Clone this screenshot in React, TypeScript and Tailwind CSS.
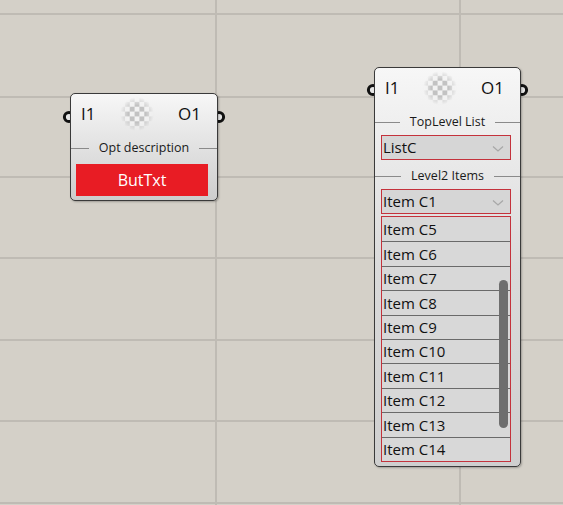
import React from "react";

const font = { fontFamily: '"Open Sans", "Noto Sans", sans-serif' };

const hLines = [14, 97, 177, 258, 340, 421, 503];
const vLines = [216, 460];

const level2 = ["Item C5", "Item C6", "Item C7", "Item C8", "Item C9", "Item C10", "Item C11", "Item C12", "Item C13", "Item C14"];

const Checker: React.FC<{ id: string }> = ({ id }) => {
  const cells = [];
  for (let r = 0; r < 7; r++) {
    for (let c = 0; c < 7; c++) {
      if ((r + c) % 2 === 0) cells.push(<rect key={`${r}-${c}`} x={c * 5} y={r * 5} width={5} height={5} fill="#c2c2c2" />);
    }
  }
  return (
    <svg width="34" height="34" viewBox="0 0 35 35">
      <defs>
        <radialGradient id={`g-${id}`} cx="50%" cy="50%" r="50%">
          <stop offset="50%" stopColor="#fff" stopOpacity="1" />
          <stop offset="100%" stopColor="#fff" stopOpacity="0" />
        </radialGradient>
        <mask id={`m-${id}`}>
          <rect width="35" height="35" fill={`url(#g-${id})`} />
        </mask>
      </defs>
      <g mask={`url(#m-${id})`}>
        <rect width="35" height="35" fill="#f2f2f2" />
        {cells}
      </g>
    </svg>
  );
};

const Port: React.FC<{ side: "left" | "right"; top: number }> = ({ side, top }) => (
  <svg
    width="14"
    height="14"
    viewBox="0 0 14 14"
    className={`absolute ${side === "left" ? "left-[-8px]" : "right-[-8px]"}`}
    style={{ top }}
  >
    <circle cx="7" cy="7" r="4.6" fill="#e6e6e6" stroke="#111" strokeWidth="3" />
  </svg>
);

const Header: React.FC<{ id: string }> = ({ id }) => (
  <div className="flex items-center justify-between h-[40px] pl-[10px] pr-[16px] text-[17px] text-[#111]">
    <span>I1</span>
    <Checker id={id} />
    <span>O1</span>
  </div>
);

const Label: React.FC<{ text: string }> = ({ text }) => (
  <div className="flex items-center h-[20px] text-[12.5px] text-[#1a1a1a]">
    <div className="flex-1 h-px bg-[#8a8a8a]" />
    <span className="px-[10px] leading-none">{text}</span>
    <div className="flex-1 h-px bg-[#8a8a8a]" />
  </div>
);

const Chevron = () => (
  <svg width="12" height="8" viewBox="0 0 12 8" className="mr-[6px] mt-[3px]">
    <path d="M1 1.5 L6 6 L11 1.5" fill="none" stroke="#a8a8a8" strokeWidth="1.3" />
  </svg>
);

const Dropdown: React.FC<{ text: string }> = ({ text }) => (
  <div className="flex items-center justify-between h-[25px] ml-[6px] mr-[9px] border border-[#c4323c] bg-[#d6d6d6] pl-px text-[15px] text-[#111]">
    <span>{text}</span>
    <Chevron />
  </div>
);

export default function App() {
  return (
    <div className="relative w-[563px] h-[505px] overflow-hidden bg-[#d4d0c8]" style={font}>
      {hLines.map((y) => (
        <div key={`h${y}`} className="absolute left-0 right-0 h-[2px] bg-[#bfbbb4]" style={{ top: y - 1 }} />
      ))}
      {vLines.map((x) => (
        <div key={`v${x}`} className="absolute top-0 bottom-0 w-[2px] bg-[#bfbbb4]" style={{ left: x - 1 }} />
      ))}

      {/* button node */}
      <div className="absolute left-[70px] top-[93px] w-[148px] h-[108px]">
        <Port side="left" top={17} />
        <Port side="right" top={17} />
        <div className="relative h-full rounded-[5px] border-[1.5px] border-[#3a3a3a] bg-gradient-to-b from-[#f7f7f7] to-[#cdcdcd] shadow-[1px_1px_2px_rgba(0,0,0,0.25)]">
          <Header id="a" />
          <div className="mt-[4px]">
            <Label text="Opt description" />
          </div>
          <div className="flex items-center justify-center h-[32px] ml-[5px] mr-[9px] mt-[6px] bg-[#e81c24] text-white text-[16px]">
            ButTxt
          </div>
        </div>
      </div>

      {/* dropdown node */}
      <div className="absolute left-[374px] top-[67px] w-[147px] h-[400px]">
        <Port side="left" top={16} />
        <Port side="right" top={16} />
        <div className="relative h-full rounded-[5px] border-[1.5px] border-[#3a3a3a] bg-gradient-to-b from-[#f7f7f7] via-[#dadada] to-[#cfcfcf] shadow-[1px_1px_2px_rgba(0,0,0,0.25)]">
          <Header id="b" />
          <div className="mt-[4px]">
            <Label text="TopLevel List" />
          </div>
          <div className="mt-[3px]">
            <Dropdown text="ListC" />
          </div>
          <div className="mt-[6px]">
            <Label text="Level2 Items" />
          </div>
          <div className="mt-[3px]">
            <Dropdown text="Item C1" />
          </div>
          <div className="relative mt-[2px] ml-[6px] mr-[9px] border border-[#c4323c] bg-[#d8d8d8]">
            {level2.map((item, i) => (
              <div
                key={item}
                className={`flex items-center h-[24.4px] pl-px text-[15px] text-[#111] ${i > 0 ? "border-t border-[#6a6a6a]" : ""}`}
              >
                {item}
              </div>
            ))}
            <div className="absolute right-[2px] top-[63px] w-[9px] h-[148px] rounded-full bg-[#6e6e6e]" />
          </div>
        </div>
      </div>
    </div>
  );
}
